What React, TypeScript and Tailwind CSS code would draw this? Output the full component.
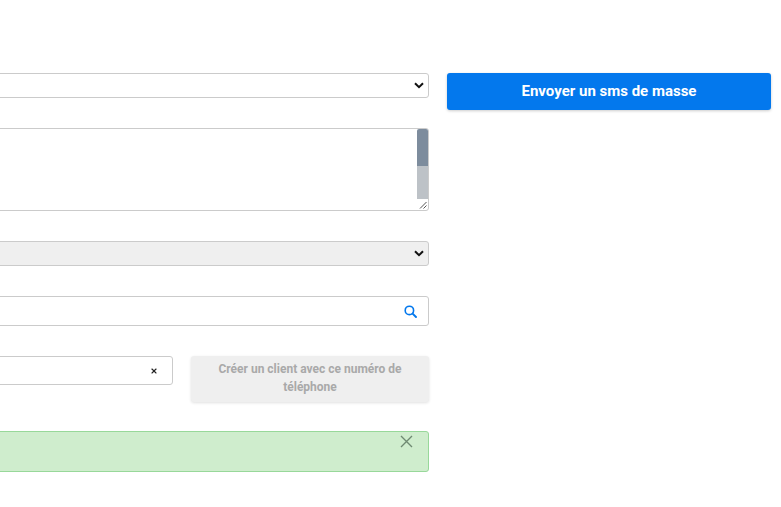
import { X } from "lucide-react"

function Chevron() {
    return (
        <svg width="10" height="7" viewBox="0 0 10 7" fill="none" className="shrink-0">
            <path d="M1 1.2 5 5.2 9 1.2" stroke="#111" strokeWidth="2" />
        </svg>
    )
}

function SelectBox({ grey = false }: { grey?: boolean }) {
    return (
        <div className={`flex h-[25px] items-center justify-end rounded-[3px] border border-[#cbcbcb] pr-[4px] ${grey ? "bg-[#efefef]" : "bg-white"}`}>
            <Chevron />
        </div>
    )
}

export default function App() {
    return (
        <div className="h-[507px] w-[781px] overflow-hidden bg-white font-['Roboto',sans-serif]">
            <div className="-ml-[40px] flex gap-[18px] pt-[73px]">
                <div className="flex w-[469px] shrink-0 flex-col gap-[30px]">
                    <SelectBox />

                    <div className="flex h-[83px] justify-end rounded-[3px] border border-[#cbcbcb] bg-white">
                        <div className="flex w-[11px] flex-col">
                            <div className="h-[37px] rounded-t-[2px] bg-[#7d8c9d]" />
                            <div className="h-[33px] bg-[#bdc2c7]" />
                            <svg width="11" height="11" viewBox="0 0 11 11" fill="none">
                                <path d="M3 9.5 9.5 3M6.5 9.5 9.5 6.5" stroke="#555" strokeWidth="1" />
                            </svg>
                        </div>
                    </div>

                    <SelectBox grey />

                    <div className="flex h-[30px] items-center justify-end rounded-[3px] border border-[#cbcbcb] bg-white pr-[11px]">
                        <svg width="13" height="13" viewBox="0 0 13 13" fill="none" className="text-[#0378ed]">
                            <circle cx="5.4" cy="5.4" r="4.2" stroke="currentColor" strokeWidth="1.6" />
                            <path d="M8.6 8.6 12 12" stroke="currentColor" strokeWidth="1.9" strokeLinecap="round" />
                        </svg>
                    </div>

                    <div className="flex h-[46px] gap-[18px]">
                        <div className="flex h-[29px] flex-1 items-center justify-end rounded-[3px] border border-[#cbcbcb] bg-white pr-[14px]">
                            <X size={8} strokeWidth={3.4} className="text-[#222]" />
                        </div>
                        <div className="flex w-[238px] shrink-0 items-center justify-center rounded-[3px] bg-[#efefef] px-3 pb-[2px] text-center text-[12px] leading-[18px] font-bold text-[#a9a9a9] shadow-[0_1px_3px_rgba(0,0,0,0.12)]">
                            Créer un client avec ce numéro de téléphone
                        </div>
                    </div>

                    <div className="-mt-[1px] flex h-[41px] items-start justify-end rounded-[3px] border border-[#98d89a] bg-[#cfedcd] pr-[15px] pt-[3px]">
                        <svg width="13" height="13" viewBox="0 0 13 13" fill="none" className="text-[#6f8a72]">
                            <path d="M1 1 12 12M12 1 1 12" stroke="currentColor" strokeWidth="1.4" />
                        </svg>
                    </div>
                </div>

                <div className="flex h-[37px] w-[324px] shrink-0 items-center justify-center rounded-[3px] bg-[#0378ed] text-[15px] font-bold text-white shadow-[0_1px_3px_rgba(0,0,0,0.2)]">
                    Envoyer un sms de masse
                </div>
            </div>
        </div>
    )
}
